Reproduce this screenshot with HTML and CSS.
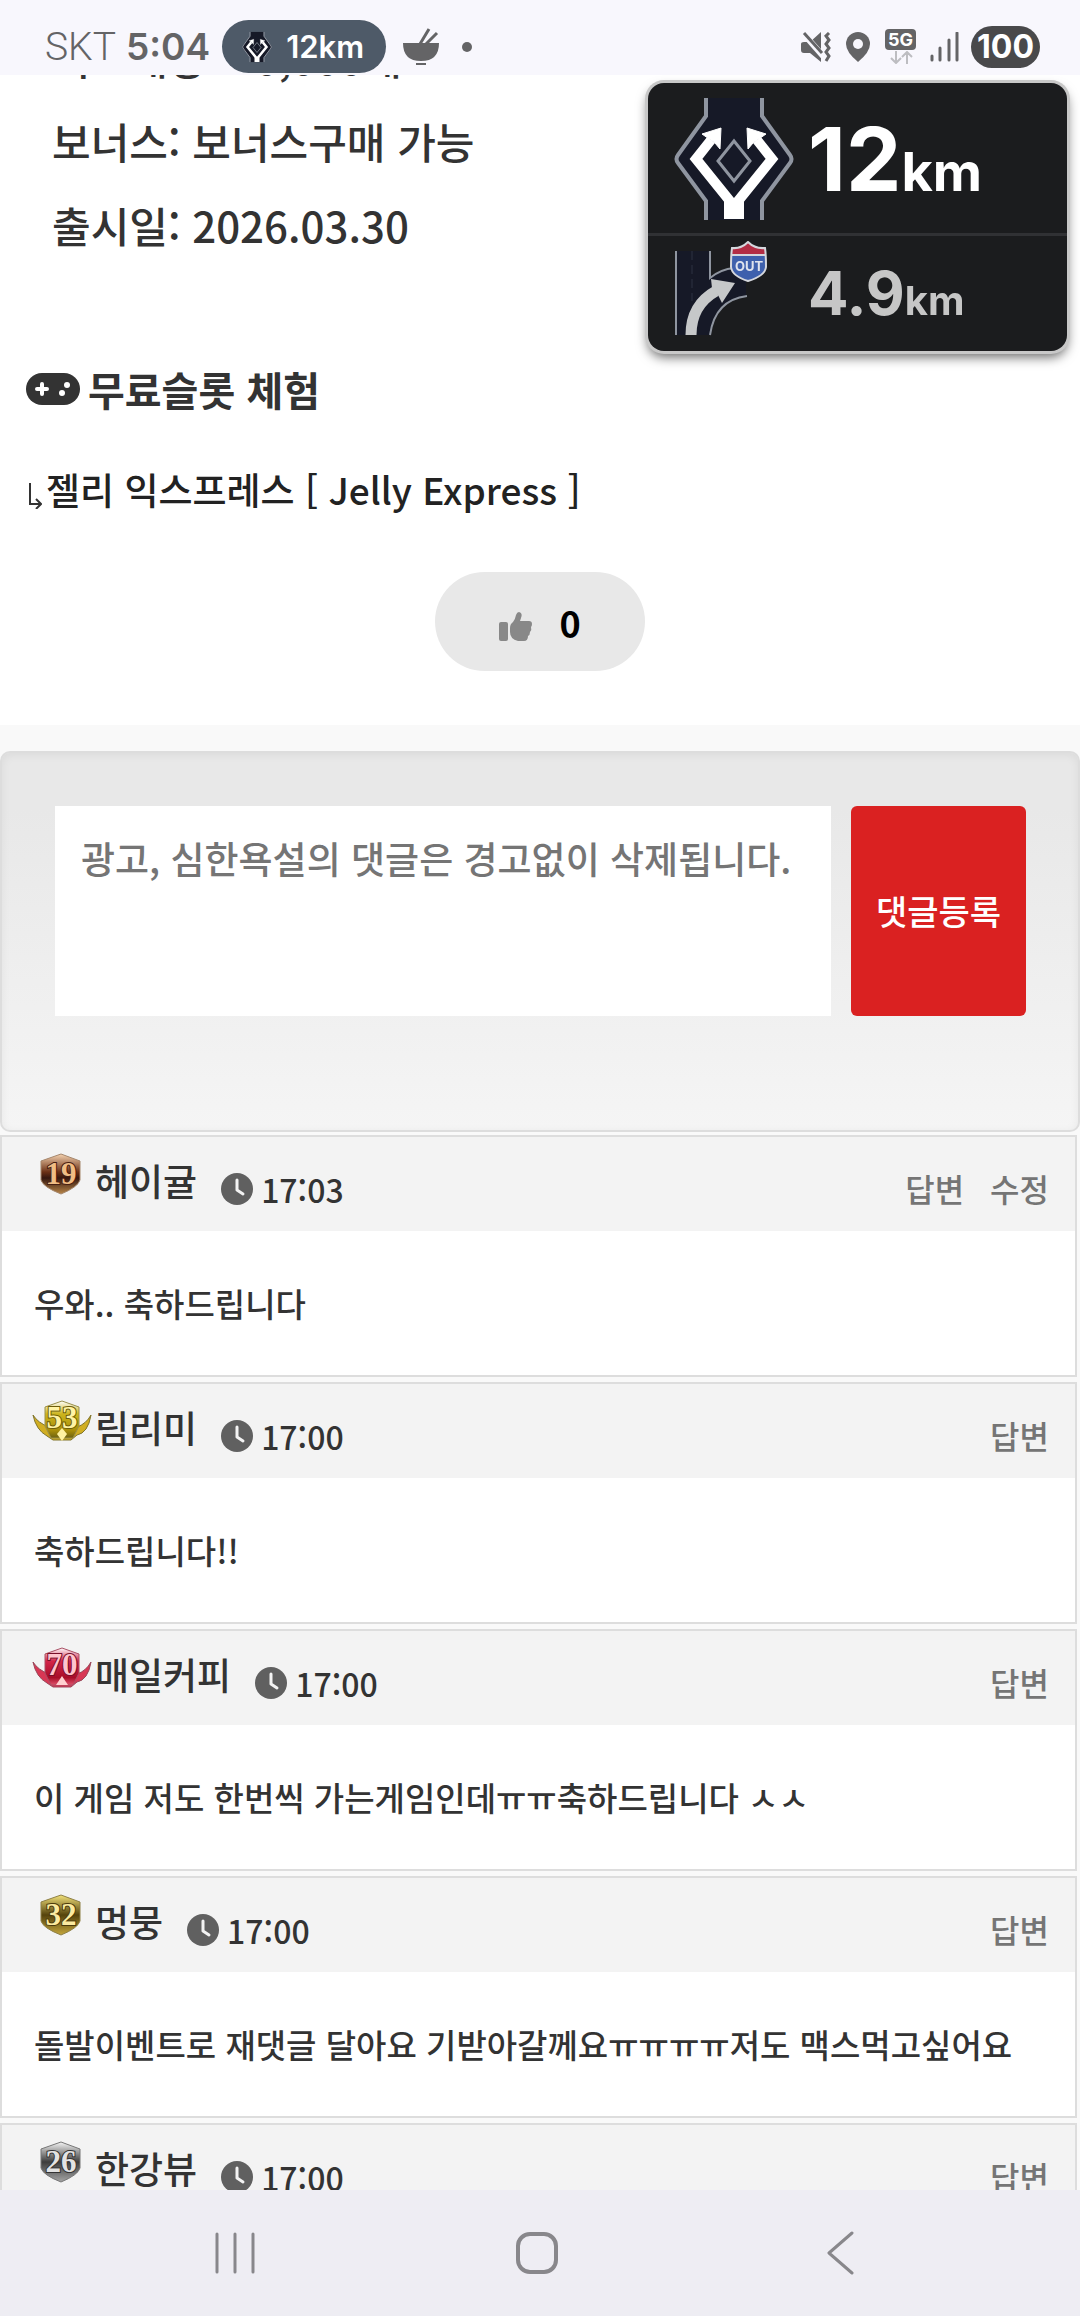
FILE: index.html
```html
<!DOCTYPE html>
<html lang="ko">
<head>
    <meta charset="UTF-8">
    <meta name="viewport" content="width=device-width, initial-scale=1.0">
    <title>젤리 익스프레스</title>
    <link rel="stylesheet" href="styles.css">
</head>
<body>
    <!-- shared icons -->
    <svg class="defs" width="0" height="0" aria-hidden="true">
        <defs>
            <linearGradient id="bronze" x1="0" y1="0" x2="0" y2="1">
                <stop offset="0" stop-color="#f6d3b0"/>
                <stop offset=".45" stop-color="#6b3015"/>
                <stop offset=".6" stop-color="#35170f"/>
                <stop offset="1" stop-color="#b98648"/>
            </linearGradient>
            <linearGradient id="gold" x1="0" y1="0" x2="0" y2="1">
                <stop offset="0" stop-color="#f3e27a"/>
                <stop offset=".5" stop-color="#55430c"/>
                <stop offset="1" stop-color="#c4a63c"/>
            </linearGradient>
            <linearGradient id="silver" x1="0" y1="0" x2="0" y2="1">
                <stop offset="0" stop-color="#f5f5f5"/>
                <stop offset=".5" stop-color="#3c3c3c"/>
                <stop offset="1" stop-color="#a5a5a5"/>
            </linearGradient>
            <linearGradient id="yellow" x1="0" y1="0" x2="0" y2="1">
                <stop offset="0" stop-color="#ffffff"/>
                <stop offset=".35" stop-color="#cdb51c"/>
                <stop offset=".8" stop-color="#a88d0a"/>
                <stop offset="1" stop-color="#6d6212"/>
            </linearGradient>
            <linearGradient id="ruby" x1="0" y1="0" x2="0" y2="1">
                <stop offset="0" stop-color="#ffffff"/>
                <stop offset=".35" stop-color="#d3254a"/>
                <stop offset=".8" stop-color="#a80d28"/>
                <stop offset="1" stop-color="#e0526c"/>
            </linearGradient>
            <symbol id="clock" viewBox="0 0 32 32">
                <circle cx="16" cy="16" r="16" fill="#606060"/>
                <path d="M16 7v10l6 4" fill="none" stroke="#f3f3f3" stroke-width="3" stroke-linecap="round" stroke-linejoin="round"/>
            </symbol>
            <symbol id="split" viewBox="0 0 120 122">
                <path d="M33 0H87V18L119 58V64L87 104V122H33V104L1 64V58L33 18Z" fill="#161927"/>
                <path d="M32 0V18L4 57Q1 61 4 65L32 103V122M88 0V18L116 57Q119 61 116 65L88 103V122" fill="none" stroke="#8f95a0" stroke-width="4"/>
                <path d="M60 43L76 63L60 83L44 63Z" fill="none" stroke="#8f95a0" stroke-width="3"/>
                <path d="M60 119V108L22 61L37 42M60 108L98 61L83 42" fill="none" stroke="#fff" stroke-width="10"/>
                <path d="M50 103H70V121H50Z" fill="#fff"/>
                <path d="M47 30L46 51L41 45L28 36ZM73 30L74 51L79 45L92 36Z" fill="#fff" stroke="#fff" stroke-width="1"/>
            </symbol>
        </defs>
    </svg>

    <header class="status-bar">
        <span class="carrier">SKT</span>
        <span class="time">5:04</span>
        <span class="nav-pill">
            <svg width="30" height="32" viewBox="0 0 120 122"><use href="#split"/></svg>
            12km
        </span>
        <svg class="bowl" width="38" height="38" viewBox="0 0 38 38">
            <path d="M1 15H37Q37 33 19 33Q1 33 1 15Z" fill="#646466"/>
            <path d="M18 16L27 1M24 16L35 5" stroke="#646466" stroke-width="3"/>
            <path d="M14 36H24" stroke="#646466" stroke-width="2"/>
        </svg>
        <span class="dot"></span>
        <div class="status-icons">
            <svg width="30" height="30" viewBox="0 0 30 30">
                <path d="M0 12Q0 10 3 10H9L20 0V30L9 21H3Q0 21 0 18Z" fill="#646466"/>
                <path d="M1 0L22 24" stroke="#f8f7fd" stroke-width="6"/>
                <path d="M3 1L21 21" stroke="#646466" stroke-width="3"/>
                <path d="M28 1L25 4L28 8L25 12L28 16L25 20L28 24L25 29" fill="none" stroke="#646466" stroke-width="3"/>
            </svg>
            <svg width="26" height="30" viewBox="0 0 26 30">
                <path d="M13 0A12 12 0 0 1 25 12Q25 20 13 30Q1 20 1 12A12 12 0 0 1 13 0Z" fill="#646466"/>
                <circle cx="13" cy="12" r="5" fill="#f8f7fd"/>
            </svg>
            <span class="network">
                <b>5G</b>
                <svg width="24" height="13" viewBox="0 0 24 13">
                    <path d="M7 0V11M2 7L7 12L12 7M18 13V2M13 6L18 1L23 6" fill="none" stroke="#bdbdc1" stroke-width="2"/>
                </svg>
            </span>
            <svg width="30" height="30" viewBox="0 0 30 30">
                <path d="M2 24V28M10 16V28M19 8V28M27 1V28" stroke="#646466" stroke-width="3" stroke-linecap="round"/>
            </svg>
            <span class="battery">100</span>
        </div>
    </header>

    <aside class="guide">
        <div class="guide-row">
            <svg width="120" height="122" viewBox="0 0 120 122"><use href="#split"/></svg>
            <span class="distance">12<small>km</small></span>
        </div>
        <div class="guide-row next">
            <svg width="120" height="104" viewBox="0 0 120 104">
                <path d="M2 10H36V37Q52 25 72 25V56Q40 58 36 94H2Z" fill="#161927"/>
                <path d="M2 10V94M36 10V37Q47 28 60 27M36 94Q41 59 73 55" fill="none" stroke="#8f95a0" stroke-width="2"/>
                <path d="M18 10V60" stroke="#2c3242" stroke-width="1" stroke-dasharray="9 5"/>
                <path d="M17 94Q17 64 42 50" fill="none" stroke="#c6c8c9" stroke-width="11"/>
                <path d="M37 38L61 42L48 62L44 54L38 47Z" fill="#c6c8c9"/>
                <path d="M74 1Q81 8 91 7Q92 14 92 26Q91 35 74 40Q58 35 57 26Q57 14 58 7Q67 8 74 1Z" fill="#3e60ad"/>
                <path d="M74 1Q81 8 91 7V14H58V7Q67 8 74 1Z" fill="#b32d45"/>
                <path d="M58 14H91" stroke="#d5d7dd" stroke-width="2"/>
                <path d="M74 1Q81 8 91 7Q92 14 92 26Q91 35 74 40Q58 35 57 26Q57 14 58 7Q67 8 74 1Z" fill="none" stroke="#d5d7dd" stroke-width="2"/>
                <text x="75" y="30" text-anchor="middle" class="out">OUT</text>
            </svg>
            <span class="distance">4.9<small>km</small></span>
        </div>
    </aside>

    <main>
        <article class="post">
            <ul class="game-info">
                <li>최고배당: 10,000배</li>
                <li>보너스: 보너스구매 가능</li>
                <li>출시일: 2026.03.30</li>
            </ul>
            <h2>
                <svg width="54" height="32" viewBox="0 0 54 32">
                    <rect width="54" height="32" rx="16" fill="#333"/>
                    <path d="M16 11V21M11 16H21" stroke="#fff" stroke-width="4" stroke-linecap="round"/>
                    <circle cx="36" cy="20" r="3" fill="#fff"/>
                    <circle cx="41" cy="12" r="3" fill="#fff"/>
                </svg>
                무료슬롯 체험
            </h2>
            <a class="demo-link" href="#">
                <svg width="13" height="26" viewBox="0 0 13 26">
                    <path d="M1 0V21H11M7 16L12 21L7 26" fill="none" stroke="#333" stroke-width="2"/>
                </svg>젤리 익스프레스 [ Jelly Express ]
            </a>
            <button class="like" type="button">
                <svg width="34" height="29" viewBox="0 0 34 29">
                    <rect x="0" y="10" width="9" height="19" rx="2" fill="#888"/>
                    <path d="M11 16Q11 12 14 10Q16 8 17 3Q18 0 20 0Q24 1 22 6L21 9H30Q33 9 33 12Q33 14 32 15Q33 18 31 20Q31 23 29 24Q29 29 25 29H19Q11 27 11 20Z" fill="#888"/>
                </svg>
                0
            </button>
        </article>

        <section class="comments">
            <form class="comment-form">
                <textarea aria-label="댓글" placeholder="광고, 심한욕설의 댓글은 경고없이 삭제됩니다."></textarea>
                <button type="submit">댓글등록</button>
            </form>

            <article class="comment">
                <header>
                    <svg class="badge" width="64" height="46" viewBox="0 0 64 46">
                        <path d="M30 2L49 9V28Q47 35 30 42Q12 35 10 28V9Z" fill="url(#bronze)" stroke="#a5876d" stroke-width="1"/>
                        <text x="30" y="32" text-anchor="middle" fill="#f0bd84" stroke="#482012">19</text>
                    </svg>
                    <strong>헤이귤</strong>
                    <time><svg width="32" height="32"><use href="#clock"/></svg>17:03</time>
                    <nav><a href="#">답변</a><a href="#">수정</a></nav>
                </header>
                <p>우와.. 축하드립니다</p>
            </article>

            <article class="comment">
                <header>
                    <svg class="badge" width="64" height="46" viewBox="0 0 64 46">
                        <path d="M2 16Q7 24 18 28L46 28Q55 25 60 16Q57 34 46 36L40 41H22L16 37Q5 31 2 16Z" fill="#d1ae22" stroke="#80752d" stroke-width="1"/>
                        <path d="M31 2L48 8V27L42 39H20L14 27V8Z" fill="url(#yellow)" stroke="#99904c" stroke-width="1"/>
                        <text x="31" y="29" text-anchor="middle" fill="#fff3a4" stroke="#6d5d09">53</text>
                        <path d="M31 29L36 35L31 42L26 35Z" fill="#fff2a0"/>
                    </svg>
                    <strong>림리미</strong>
                    <time><svg width="32" height="32"><use href="#clock"/></svg>17:00</time>
                    <nav><a href="#">답변</a></nav>
                </header>
                <p>축하드립니다!!</p>
            </article>

            <article class="comment">
                <header>
                    <svg class="badge" width="64" height="46" viewBox="0 0 64 46">
                        <path d="M2 16Q7 24 18 28L46 28Q55 25 60 16Q57 34 46 36L40 41H22L16 37Q5 31 2 16Z" fill="#d83754" stroke="#99485a" stroke-width="1"/>
                        <path d="M31 2L48 8V27L42 39H20L14 27V8Z" fill="url(#ruby)" stroke="#a95065" stroke-width="1"/>
                        <text x="31" y="29" text-anchor="middle" fill="#ffc4cd" stroke="#780f29">70</text>
                        <path d="M31 30L37 39H25Z" fill="#ffd0d0"/>
                    </svg>
                    <strong>매일커피</strong>
                    <time><svg width="32" height="32"><use href="#clock"/></svg>17:00</time>
                    <nav><a href="#">답변</a></nav>
                </header>
                <p>이 게임 저도 한번씩 가는게임인데ㅠㅠ축하드립니다 ㅅㅅ</p>
            </article>

            <article class="comment">
                <header>
                    <svg class="badge" width="64" height="46" viewBox="0 0 64 46">
                        <path d="M30 2L49 9V28Q47 35 30 42Q12 35 10 28V9Z" fill="url(#gold)" stroke="#8e8047" stroke-width="1"/>
                        <text x="30" y="32" text-anchor="middle" fill="#fbeaa0" stroke="#4b3a0c">32</text>
                    </svg>
                    <strong>멍뭉</strong>
                    <time><svg width="32" height="32"><use href="#clock"/></svg>17:00</time>
                    <nav><a href="#">답변</a></nav>
                </header>
                <p>돌발이벤트로 재댓글 달아요 기받아갈께요ㅠㅠㅠㅠ저도 맥스먹고싶어요</p>
            </article>

            <article class="comment">
                <header>
                    <svg class="badge" width="64" height="46" viewBox="0 0 64 46">
                        <path d="M30 2L49 9V28Q47 35 30 42Q12 35 10 28V9Z" fill="url(#silver)" stroke="#777" stroke-width="1"/>
                        <text x="30" y="32" text-anchor="middle" fill="#e2e2e2" stroke="#333">26</text>
                    </svg>
                    <strong>한강뷰</strong>
                    <time><svg width="32" height="32"><use href="#clock"/></svg>17:00</time>
                    <nav><a href="#">답변</a></nav>
                </header>
            </article>
        </section>
    </main>

    <footer class="system-nav">
        <button type="button" aria-label="최근 앱">
            <svg width="44" height="44" viewBox="0 0 44 44">
                <path d="M4 3V41M22 3V41M40 3V41" stroke="#88878b" stroke-width="3" stroke-linecap="round"/>
            </svg>
        </button>
        <button type="button" aria-label="홈">
            <svg width="44" height="44" viewBox="0 0 44 44">
                <rect x="3" y="3" width="38" height="38" rx="12" fill="none" stroke="#88878b" stroke-width="4"/>
            </svg>
        </button>
        <button type="button" aria-label="뒤로">
            <svg width="44" height="44" viewBox="0 0 44 44">
                <path d="M34 2L11 22L34 42" fill="none" stroke="#88878b" stroke-width="3" stroke-linecap="round" stroke-linejoin="round"/>
            </svg>
        </button>
    </footer>
</body>
</html>
```
FILE: styles.css
```css
* {
    box-sizing: border-box;
}
body {
    margin: 0;
    height: 100vh;
    overflow: hidden;
    font-family: "Noto Sans CJK KR", sans-serif;
    font-weight: 500;
    color: #333;
    background: #f9f9f9;
}
svg {
    display: block;
    flex: none;
}
.defs {
    position: absolute;
}
button {
    font-family: inherit;
    border: none;
    cursor: pointer;
}
a {
    color: inherit;
    text-decoration: none;
}

/* status bar */
.status-bar {
    position: fixed;
    top: 0;
    left: 0;
    right: 0;
    z-index: 2;
    height: 75px;
    padding: 18px 40px 0 45px;
    display: flex;
    align-items: center;
    background: #f8f7fd;
    color: #646466;
    font-family: Inter, sans-serif;
}
.carrier {
    font-family: Roboto, sans-serif;
    font-size: 39px;
    font-weight: 300;
}
.time {
    margin-left: 10px;
    font-size: 37px;
    font-weight: 600;
}
.nav-pill {
    display: flex;
    align-items: center;
    gap: 14px;
    height: 53px;
    margin-left: 12px;
    padding: 0 22px 0 20px;
    border-radius: 27px;
    background: #4e5a68;
    color: #fff;
    font-size: 31px;
    font-weight: 600;
}
.bowl {
    margin-left: 16px;
}
.dot {
    width: 10px;
    height: 10px;
    margin-left: 22px;
    border-radius: 50%;
    background: #646466;
}
.status-icons {
    display: flex;
    align-items: center;
    gap: 14px;
    margin-left: auto;
}
.network {
    display: flex;
    flex-direction: column;
    align-items: center;
    gap: 1px;
}
.network b {
    padding: 0 3px;
    border-radius: 4px;
    background: #646466;
    color: #fff;
    font-size: 18px;
    line-height: 21px;
}
.battery {
    margin-left: -3px;
    padding: 0 6px;
    border-radius: 21px;
    background: #49494b;
    color: #fff;
    font-size: 32px;
    font-weight: 700;
    line-height: 42px;
}

/* route guidance overlay */
.guide {
    position: fixed;
    top: 83px;
    right: 13px;
    z-index: 3;
    width: 419px;
    border-radius: 16px;
    background: #1b1c1e;
    color: #fff;
    font-family: Inter, sans-serif;
    font-weight: 700;
    box-shadow: 0 0 0 3px #c8c8c8, 0 6px 12px rgba(0, 0, 0, 0.6);
}
.guide-row {
    display: flex;
    align-items: center;
    gap: 14px;
    height: 150px;
    padding: 2px 0 0 26px;
}
.guide-row.next {
    height: 118px;
    padding: 0 0 2px 26px;
    border-top: 3px solid #303134;
    color: #c6c6c6;
}
.distance {
    font-size: 88px;
}
.distance small {
    font-size: 54px;
}
.next .distance {
    font-size: 60px;
}
.next .distance small {
    font-size: 40px;
}
.out {
    fill: #dfe3ee;
    font-size: 13px;
}

/* post */
.post {
    padding: 15px 26px 54px;
    display: flex;
    flex-direction: column;
    background: #fff;
}
.game-info {
    margin: 0;
    padding: 0 0 0 26px;
    list-style: none;
    font-size: 42px;
    line-height: 84px;
}
h2 {
    display: flex;
    align-items: center;
    gap: 8px;
    margin: 82px 0 0;
    font-size: 40px;
    line-height: 80px;
}
.demo-link {
    display: flex;
    align-items: center;
    gap: 4px;
    margin: 20px 0 0 3px;
    color: #222;
    font-size: 37px;
    line-height: 80px;
}
.demo-link svg {
    margin-top: 14px;
}
.like {
    display: flex;
    align-items: center;
    justify-content: center;
    gap: 26px;
    align-self: center;
    width: 210px;
    height: 99px;
    margin-top: 43px;
    border-radius: 50px;
    background: #e8e8e8;
    color: #000;
    font-size: 36px;
    font-weight: 700;
}
.like svg {
    margin-top: 10px;
}

/* comments */
.comments {
    padding-top: 26px;
}
.comment-form {
    display: flex;
    gap: 20px;
    padding: 53px 52px 114px 53px;
    border: 2px solid #ddd;
    border-radius: 10px;
    background: linear-gradient(#e8e8e8 15%, #f5f5f5);
    box-shadow: inset 0 2px 10px rgba(0, 0, 0, 0.06);
}
.comment-form textarea {
    flex: 1;
    min-width: 0;
    height: 210px;
    padding: 25px 20px 25px 26px;
    border: none;
    resize: none;
    background: #fff;
    color: #333;
    font: inherit;
    font-size: 37px;
    line-height: 54px;
}
.comment-form textarea::placeholder {
    color: #757575;
}
.comment-form button {
    width: 175px;
    padding: 0 0 2px;
    border-radius: 6px;
    background: #da2121;
    color: #fff;
    font-size: 34px;
    font-weight: 500;
}
.comment {
    margin: 5px 3px 0 0;
    border: 2px solid #ddd;
    background: #fff;
}
.comment-form + .comment {
    margin-top: 3px;
}
.comment header {
    display: flex;
    align-items: center;
    height: 94px;
    padding: 0 26px 0 29px;
    background: #f3f3f3;
}
.badge {
    margin-bottom: 18px;
}
.badge text {
    font-family: "Liberation Serif", serif;
    font-size: 31px;
    font-weight: 700;
    stroke-width: 2px;
    paint-order: stroke;
}
.comment strong {
    margin-bottom: 8px;
    font-size: 37px;
    font-weight: 500;
    line-height: 60px;
}
.comment time {
    display: flex;
    align-items: center;
    gap: 8px;
    margin: 10px 0 0 24px;
    font-size: 32px;
}
.comment nav {
    display: flex;
    gap: 26px;
    margin: 8px 0 0 auto;
    color: #757575;
    font-size: 32px;
}
.comment p {
    margin: 0;
    padding: 48px 32px;
    font-size: 33px;
    line-height: 48px;
}

/* system navigation */
.system-nav {
    position: fixed;
    left: 0;
    right: 0;
    bottom: 0;
    z-index: 2;
    display: flex;
    height: 126px;
    padding: 0 89px 0 84px;
    background: #eeedf3;
}
.system-nav button {
    display: flex;
    flex: 1;
    align-items: center;
    justify-content: center;
    background: none;
}
```
